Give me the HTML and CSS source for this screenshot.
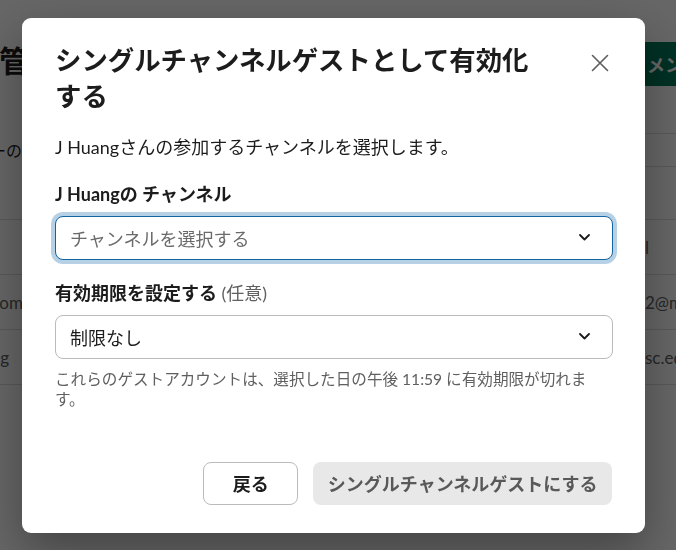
FILE: index.html
```html
<!DOCTYPE html>
<html lang="ja">
<head>
<meta charset="utf-8">
<title>シングルチャンネルゲストとして有効化する</title>
<link rel="stylesheet" href="styles.css">
</head>
<body>
<div class="page">
  <div class="page-inner">
    <div class="page-head">
      <h1 class="page-title">管理者ページ</h1>
      <div class="invite-btn">メンバーを招待する</div>
    </div>
    <div class="page-sub">
      <div class="sub-clip"><span>メンバーの組</span></div>
      <div></div>
      <div class="search-box"></div>
    </div>
    <div class="table">
      <div class="row">
        <div class="cell-left"></div>
        <div></div>
        <div class="cell-right">l</div>
      </div>
      <div class="row">
        <div class="cell-left"><span>jhuang@example.com</span></div>
        <div></div>
        <div class="cell-right">2@mail.com</div>
      </div>
      <div class="row">
        <div class="cell-left cell-left-short"><span>jhuang</span></div>
        <div></div>
        <div class="cell-right">sc.edu</div>
      </div>
    </div>
  </div>
</div>

<div class="overlay">
  <div class="modal" role="dialog" aria-labelledby="modal-title">
    <div class="modal-header">
      <h2 class="modal-title" id="modal-title">シングルチャンネルゲストとして有効化する</h2>
      <button class="close-btn" type="button" aria-label="閉じる">
        <svg width="18" height="18" viewBox="0 0 18 18" aria-hidden="true">
          <path d="M1.5 1.5L16.5 16.5M16.5 1.5L1.5 16.5" stroke="#5e5d5e" stroke-width="1.6" fill="none" stroke-linecap="round"/>
        </svg>
      </button>
    </div>
    <div class="modal-body">
      <p class="desc">J Huangさんの参加するチャンネルを選択します。</p>
      <div class="field field-first">
        <label class="field-label">J Huangの チャンネル</label>
        <div class="select select-focused">
          <span class="placeholder">チャンネルを選択する</span>
          <svg class="chevron" width="11" height="7" viewBox="0 0 11 7" aria-hidden="true">
            <path d="M1 1l4.5 4.5L10 1" stroke="#1d1c1d" stroke-width="1.8" fill="none" stroke-linecap="round" stroke-linejoin="round"/>
          </svg>
        </div>
      </div>
      <div class="field">
        <label class="field-label">有効期限を設定する <span class="optional">(任意)</span></label>
        <div class="select">
          <span class="value">制限なし</span>
          <svg class="chevron" width="11" height="7" viewBox="0 0 11 7" aria-hidden="true">
            <path d="M1 1l4.5 4.5L10 1" stroke="#1d1c1d" stroke-width="1.8" fill="none" stroke-linecap="round" stroke-linejoin="round"/>
          </svg>
        </div>
        <p class="help">これらのゲストアカウントは、選択した日の午後 11:59 に有効期限が切れます。</p>
      </div>
    </div>
    <div class="modal-footer">
      <button class="btn btn-secondary" type="button">戻る</button>
      <button class="btn btn-primary" type="button" disabled>シングルチャンネルゲストにする</button>
    </div>
  </div>
</div>
</body>
</html>
```

FILE: styles.css
```css
* {
  box-sizing: border-box;
}

html, body {
  margin: 0;
  padding: 0;
}

body {
  font-family: Lato, "Noto Sans CJK JP", sans-serif;
  color: #1d1c1d;
  background: #ffffff;
}

/* ---------- background page ---------- */
.page {
  width: 676px;
  height: 550px;
  overflow: hidden;
  background: #ffffff;
}

.page-inner {
  width: 760px;
}

.page-head {
  display: grid;
  grid-template-columns: 631px max-content;
  align-items: start;
  padding-top: 42px;
}

.page-title {
  margin: 0 0 0 -1px;
  font-size: 30px;
  line-height: 36px;
  font-weight: 700;
  white-space: nowrap;
  overflow: hidden;
}

.invite-btn {
  height: 44px;
  display: flex;
  align-items: center;
  padding: 0 16px;
  border-radius: 8px;
  background: #007a5a;
  color: #ffffff;
  font-size: 18px;
  font-weight: 700;
  white-space: nowrap;
}

.page-sub {
  display: grid;
  grid-template-columns: 38px 1fr 220px;
  align-items: center;
  margin-top: 47px;
  height: 34px;
}

.sub-clip {
  display: flex;
  justify-content: flex-end;
  overflow: hidden;
  white-space: nowrap;
  font-size: 16px;
  color: #1d1c1d;
}

.search-box {
  height: 34px;
  border: 1px solid #dddddd;
  border-radius: 6px;
}

.table {
  margin-top: 52px;
  border-top: 1px solid #dddddd;
}

.row {
  display: grid;
  grid-template-columns: 23px 1fr 115px;
  align-items: center;
  height: 55px;
  border-bottom: 1px solid #dddddd;
  font-size: 17px;
  color: #616061;
}

.cell-left {
  display: flex;
  justify-content: flex-end;
  overflow: hidden;
  white-space: nowrap;
}

.cell-left-short {
  padding-right: 14px;
}

.cell-right {
  white-space: nowrap;
  overflow: hidden;
}

/* ---------- overlay & modal ---------- */
.overlay {
  position: fixed;
  inset: 0;
  background: rgba(0, 0, 0, 0.6);
  display: flex;
  align-items: center;
  justify-content: center;
  padding-right: 9px;
}

.modal {
  width: 623px;
  background: #ffffff;
  border-radius: 9px;
  box-shadow: 0 18px 48px 0 rgba(0, 0, 0, 0.35);
  display: flex;
  flex-direction: column;
}

.modal-header {
  display: flex;
  align-items: flex-start;
  gap: 36px;
  padding: 24px 24px 0 33px;
}

.modal-title {
  flex: 1;
  margin: 0;
  font-size: 26.4px;
  line-height: 36px;
  font-weight: 700;
  color: #1d1c1d;
}

.close-btn {
  width: 43px;
  height: 43px;
  flex: none;
  display: flex;
  align-items: center;
  justify-content: center;
  padding: 0;
  border: none;
  background: transparent;
  border-radius: 6px;
  cursor: pointer;
}

.modal-body {
  padding: 0 32px 29px 33px;
}

.desc {
  margin: 20px 0 0;
  font-size: 18px;
  line-height: 26px;
  color: #1d1c1d;
}

.field {
  margin-top: 20px;
}

.field-first {
  margin-top: 21px;
}

.field-label {
  display: block;
  margin-bottom: 9px;
  font-size: 18px;
  line-height: 26px;
  font-weight: 700;
  color: #1d1c1d;
}

.optional {
  font-weight: 400;
  color: #616061;
}

.select {
  height: 44px;
  display: flex;
  align-items: center;
  justify-content: space-between;
  padding: 0 22px 0 14px;
  border: 1px solid #bcbbbc;
  border-radius: 8px;
  font-size: 18px;
  background: #ffffff;
}

.select-focused {
  border-color: #1264a3;
  box-shadow: 0 0 0 4px #b6d0e5;
}

.placeholder {
  color: #6b6a6b;
}

.value {
  color: #1d1c1d;
}

.chevron {
  flex: none;
}

.help {
  margin: 10px 0 0;
  font-size: 15.6px;
  line-height: 20px;
  color: #616061;
}

.modal-footer {
  display: flex;
  justify-content: flex-end;
  gap: 15px;
  padding: 24px 33px 28px 33px;
}

.btn {
  height: 43px;
  min-width: 95px;
  padding: 0 14.5px;
  border-radius: 8px;
  font-family: Lato, "Noto Sans CJK JP", sans-serif;
  font-size: 18px;
  font-weight: 700;
  display: flex;
  align-items: center;
  justify-content: center;
  white-space: nowrap;
}

.btn-secondary {
  background: #ffffff;
  color: #1d1c1d;
  border: 1px solid #bcbbbc;
}

.btn-primary {
  background: #e8e8e8;
  color: #5a595a;
  border: none;
}
```
